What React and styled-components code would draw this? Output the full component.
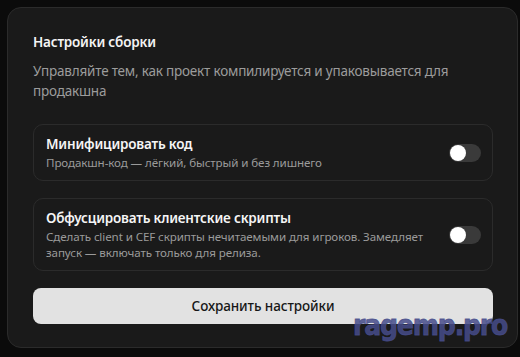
import React, { useState } from "react";
import styled, { createGlobalStyle } from "styled-components";

const Global = createGlobalStyle`
  html, body { margin: 0; padding: 0; background: #0b0b0b; }
  body { font-family: "Noto Sans", "Open Sans", sans-serif; }
  * { box-sizing: border-box; }
`;

const Page = styled.div`
  position: relative;
  width: 520px;
  height: 357px;
  padding: 7px 2px 0 7px;
  background: #0b0b0b;
  overflow: hidden;
`;

const Card = styled.section`
  width: 511px;
  height: 341px;
  background: #1a1a1a;
  border: 1px solid #2b2b2b;
  border-radius: 14px;
  padding: 24px 24px 0 25px;
  display: flex;
  flex-direction: column;
`;

const Title = styled.h2`
  margin: 0;
  font-size: 13.5px;
  letter-spacing: -0.2px;
  line-height: 20px;
  font-weight: 600;
  color: #f4f4f4;
`;

const Description = styled.p`
  margin: 9px 0 0;
  font-size: 13.5px;
  letter-spacing: -0.2px;
  line-height: 20px;
  color: #9c9c9c;
`;

const Options = styled.div`
  display: flex;
  flex-direction: column;
  gap: 17px;
  margin-top: 23px;
`;

const Row = styled.div`
  display: flex;
  align-items: center;
  gap: 16px;
  padding: 0 11px 0 12px;
  border: 1px solid #2b2b2b;
  border-radius: 10px;
  height: ${(p) => (p.$tall ? "73px" : "57px")};
`;

const RowText = styled.div`
  flex: 1;
  display: flex;
  flex-direction: column;
  gap: 1px;
`;

const RowTitle = styled.div`
  font-size: 13.5px;
  letter-spacing: -0.2px;
  line-height: 19px;
  font-weight: 600;
  color: #f5f5f5;
`;

const RowSub = styled.div`
  font-size: 11.6px;
  letter-spacing: -0.1px;
  line-height: 16px;
  color: #9a9a9a;
`;

const Switch = styled.button`
  flex: none;
  width: 32px;
  height: 18px;
  border: none;
  padding: 1px;
  border-radius: 9px;
  background: ${(p) => (p.$on ? "#e2e2e2" : "#3a3a3a")};
  display: flex;
  justify-content: ${(p) => (p.$on ? "flex-end" : "flex-start")};
  cursor: pointer;
`;

const Knob = styled.span`
  width: 16px;
  height: 16px;
  border-radius: 50%;
  background: ${(p) => (p.$on ? "#1a1a1a" : "#ffffff")};
`;

const SaveButton = styled.button`
  margin-top: 17px;
  height: 36px;
  width: 100%;
  border: none;
  border-radius: 8px;
  background: #e2e2e2;
  color: #161616;
  font-family: inherit;
  font-size: 13.5px;
  letter-spacing: -0.1px;
  font-weight: 500;
  cursor: pointer;
`;

const Watermark = styled.div`
  position: absolute;
  left: 353px;
  top: 312px;
  font-family: "DejaVu Sans Condensed", "DejaVu Sans", sans-serif;
  font-stretch: condensed;
  font-weight: 700;
  font-size: 28px;
  line-height: 28px;
  letter-spacing: -1.2px;
  color: rgba(70, 76, 138, 0.85);
  -webkit-text-stroke: 0.8px rgba(70, 76, 138, 0.85);
  pointer-events: none;
`;

function Toggle({ on, onClick }) {
  return (
    <Switch $on={on} onClick={onClick} aria-pressed={on}>
      <Knob $on={on} />
    </Switch>
  );
}

export default function App() {
  const [minify, setMinify] = useState(false);
  const [obf, setObf] = useState(false);
  return (
    <>
      <Global />
      <Page>
        <Card>
          <Title>Настройки сборки</Title>
          <Description>
            Управляйте тем, как проект компилируется и упаковывается для продакшна
          </Description>
          <Options>
            <Row>
              <RowText>
                <RowTitle>Минифицировать код</RowTitle>
                <RowSub>Продакшн-код — лёгкий, быстрый и без лишнего</RowSub>
              </RowText>
              <Toggle on={minify} onClick={() => setMinify(!minify)} />
            </Row>
            <Row $tall>
              <RowText>
                <RowTitle>Обфусцировать клиентские скрипты</RowTitle>
                <RowSub>
                  Сделать client и CEF скрипты нечитаемыми для игроков. Замедляет
                  запуск — включать только для релиза.
                </RowSub>
              </RowText>
              <Toggle on={obf} onClick={() => setObf(!obf)} />
            </Row>
          </Options>
          <SaveButton>Сохранить настройки</SaveButton>
        </Card>
        <Watermark>ragemp.pro</Watermark>
      </Page>
    </>
  );
}
